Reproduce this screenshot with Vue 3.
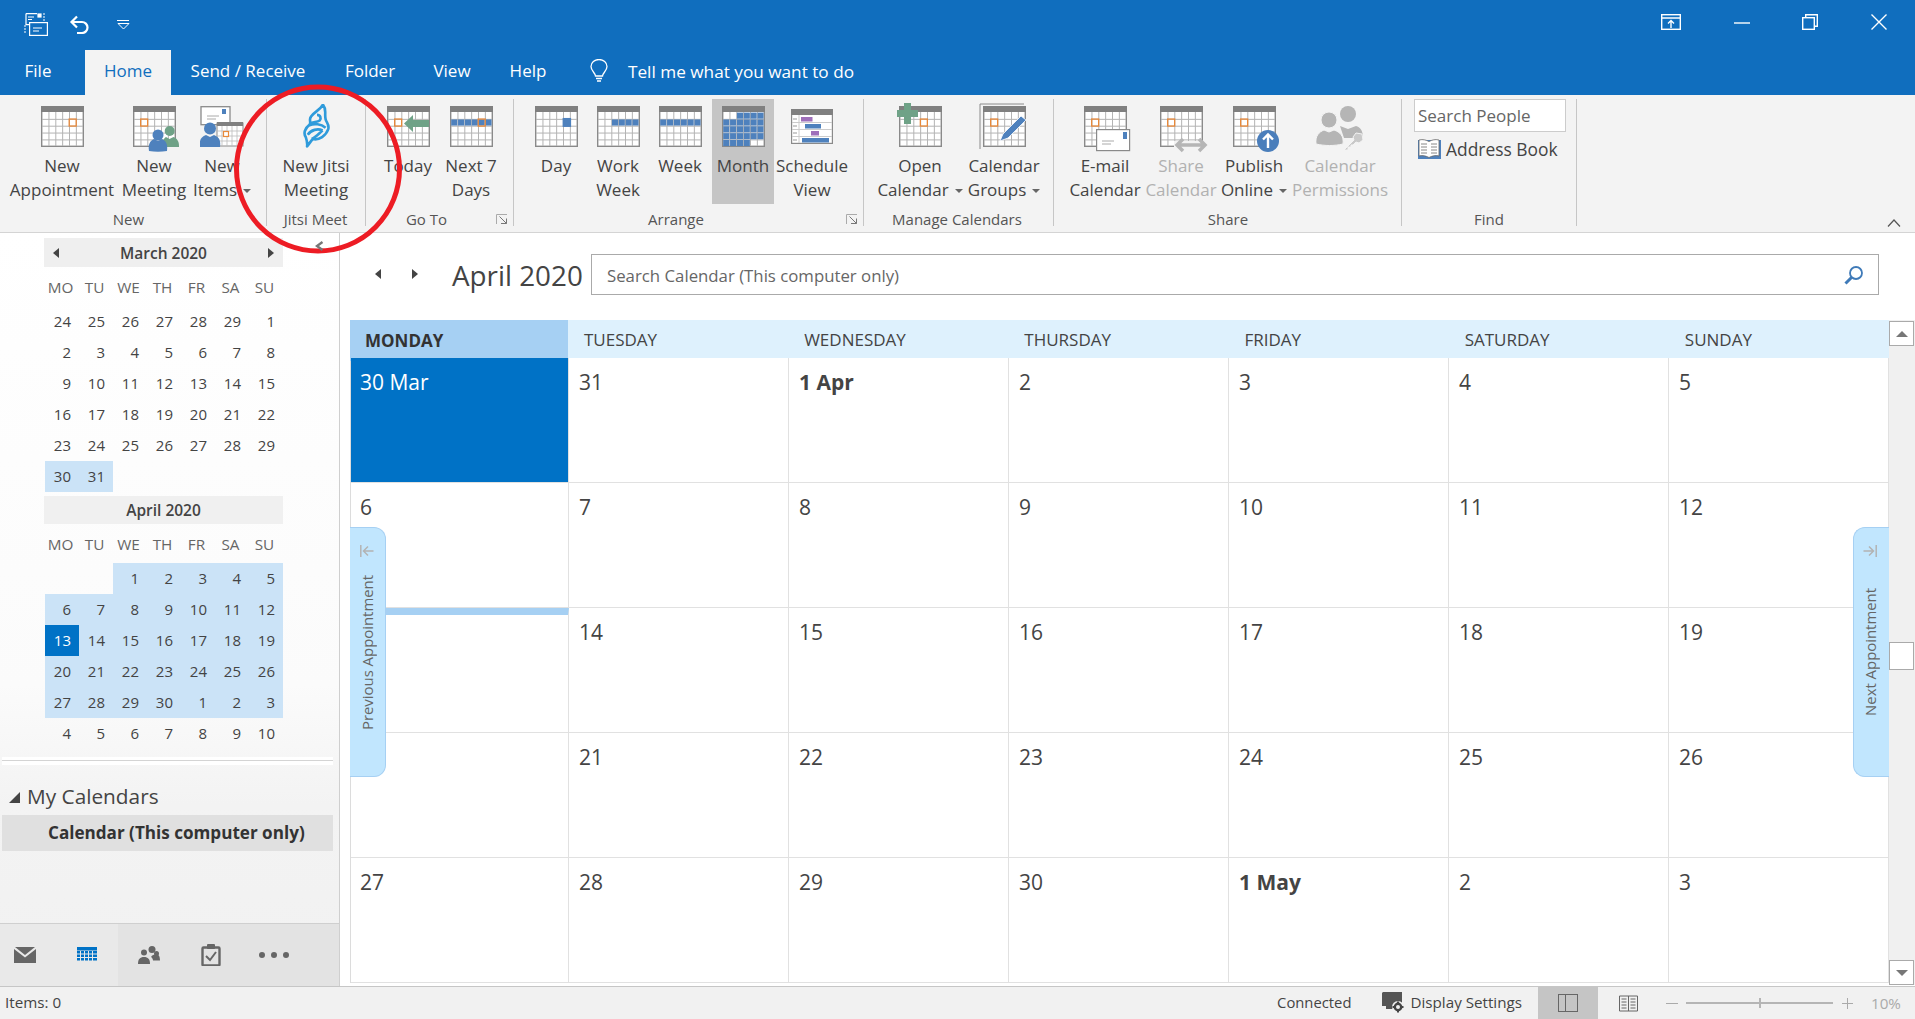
<script setup>
import { h } from 'vue'

// calendar glyph used by nearly every ribbon button
function CalIcon(props, { slots }) {
  const line = props.muted ? '#cfcdcf' : '#b4b4b4'
  const cell = (c, r) => [1.2 + c * 6.85, 6.6 + r * 6.85]
  const kids = [
    h('rect', { x: 0.7, y: 0.7, width: 41.6, height: 39.6, fill: props.muted ? '#f3eff3' : '#fff', stroke: props.muted ? '#bdbdbd' : '#8a8a8a', 'stroke-width': 1.4 }),
    h('rect', { x: 0, y: 0, width: 43, height: 6, fill: props.muted ? '#bdbdbd' : '#808080' })
  ]
  for (let c = 1; c < 6; c++) kids.push(h('rect', { x: cell(c, 0)[0] - 0.6, y: 6, width: 1, height: 34, fill: line }))
  for (let r = 1; r < 5; r++) kids.push(h('rect', { x: 1, y: cell(0, r)[1] - 0.6, width: 41, height: 1, fill: line }))
  for (const [c, r] of props.fill || []) {
    const [x, y] = cell(c, r)
    kids.push(h('rect', { x, y, width: 6.1, height: 6.1, fill: '#4e81bd' }))
  }
  if (props.big) {
    const [x, y] = cell(props.big[0], props.big[1])
    kids.push(h('rect', { x: x - 1, y: y - 1.5, width: 8.5, height: 9, fill: '#4e81bd' }))
  }
  if (props.mark) {
    const [x, y] = cell(props.mark[0], props.mark[1])
    kids.push(h('rect', { x: x - 0.4, y: y - 0.4, width: 7, height: 7, fill: 'none', stroke: props.muted ? '#bdb9bd' : '#e8893a', 'stroke-width': 1.3 }))
  }
  return h('svg', { width: 43, height: 41, viewBox: '0 0 43 41', style: 'overflow:visible;display:block' }, [kids, slots.default && slots.default()])
}
CalIcon.props = ['fill', 'mark', 'big', 'muted']

const row = (r, from = 0, to = 5) => {
  const out = []
  for (let c = from; c <= to; c++) out.push([c, r])
  return out
}

const groups = [
  {
    label: 'New', w: 267, pl: 4, lp: 13,
    btns: [
      { w: 116, lines: ['New', 'Appointment'], cal: true, mark: [4, 1] },
      { w: 68, lines: ['New', 'Meeting'], icon: 'meeting' },
      { w: 68, lines: ['New', 'Items'], icon: 'items', caret: true }
    ]
  },
  {
    label: 'Jitsi Meet', w: 99, pl: 0, lp: 1,
    btns: [{ w: 98, lines: ['New Jitsi', 'Meeting'], icon: 'jitsi' }]
  },
  {
    label: 'Go To', w: 148, pl: 12, lp: 38, launcher: true,
    btns: [
      { w: 60, lines: ['Today'], icon: 'today' },
      { w: 66, lines: ['Next 7', 'Days'], cal: true, fill: row(1), mark: [4, 1] }
    ]
  },
  {
    label: 'Arrange', w: 350, pl: 16, lp: 41, launcher: true,
    btns: [
      { w: 52, lines: ['Day'], cal: true, big: [4, 1] },
      { w: 72, lines: ['Work', 'Week'], cal: true, fill: row(1, 2) },
      { w: 52, lines: ['Week'], cal: true, fill: row(1) },
      { w: 62, ml: 6, lines: ['Month'], cal: true, active: true, fill: [...row(0, 2), ...row(1), ...row(2), ...row(3), ...row(4, 0, 3)] },
      { w: 76, lines: ['Schedule', 'View'], icon: 'schedule' }
    ]
  },
  {
    label: 'Manage Calendars', w: 190, pl: 8, lp: 11,
    btns: [
      { w: 96, lines: ['Open', 'Calendar'], icon: 'open', caret: true },
      { w: 72, lines: ['Calendar', 'Groups'], icon: 'cgroups', caret: true }
    ]
  },
  {
    label: 'Share', w: 348, pl: 12, lp: 11,
    btns: [
      { w: 78, lines: ['E-mail', 'Calendar'], icon: 'email' },
      { w: 74, lines: ['Share', 'Calendar'], icon: 'share', off: true },
      { w: 72, lines: ['Publish', 'Online'], icon: 'publish', caret: true },
      { w: 100, lines: ['Calendar', 'Permissions'], icon: 'perm', off: true }
    ]
  }
]

const weekLetters = ['MO', 'TU', 'WE', 'TH', 'FR', 'SA', 'SU']

const march = [24, 25, 26, 27, 28, 29, 1, 2, 3, 4, 5, 6, 7, 8, 9, 10, 11, 12, 13, 14, 15, 16, 17, 18, 19, 20, 21, 22, 23, 24, 25, 26, 27, 28, 29, 30, 31]
const marchCells = march.map((d, i) => ({ d, on: i >= 35 }))

const april = ['', '', 1, 2, 3, 4, 5, 6, 7, 8, 9, 10, 11, 12, 13, 14, 15, 16, 17, 18, 19, 20, 21, 22, 23, 24, 25, 26, 27, 28, 29, 30, 1, 2, 3, 4, 5, 6, 7, 8, 9, 10]
const aprilCells = april.map((d, i) => ({ d, on: i >= 2 && i < 35, sel: i === 14 }))

const dayNames = ['MONDAY', 'TUESDAY', 'WEDNESDAY', 'THURSDAY', 'FRIDAY', 'SATURDAY', 'SUNDAY']
const days = [
  { t: '30 Mar', sel: true }, { t: '31' }, { t: '1 Apr', b: true }, { t: '2' }, { t: '3' }, { t: '4' }, { t: '5' },
  { t: '6' }, { t: '7' }, { t: '8' }, { t: '9' }, { t: '10' }, { t: '11' }, { t: '12' },
  { t: '', today: true }, { t: '14' }, { t: '15' }, { t: '16' }, { t: '17' }, { t: '18' }, { t: '19' },
  { t: '' }, { t: '21' }, { t: '22' }, { t: '23' }, { t: '24' }, { t: '25' }, { t: '26' },
  { t: '27' }, { t: '28' }, { t: '29' }, { t: '30' }, { t: '1 May', b: true }, { t: '2' }, { t: '3' }
]
</script>

<template>
  <div class="app">
    <!-- title bar -->
    <div class="titlebar">
      <svg class="qat-send" width="24" height="23" viewBox="0 0 24 23" fill="none" stroke="#fff" stroke-width="1.2">
        <path d="M2 .6h11M2 .6v11h4M4 4h6M4 6.5h4" />
        <rect x="14" y="1" width="3" height="3" fill="#fff" />
        <path d="M19 1h2M19 4h2M19 7h2M0 13h3M0 16h3M0 19h3" stroke-dasharray="2 1" />
        <rect x="5.6" y="9.6" width="17.8" height="12.8" />
        <path d="M9 15h9M9 18h6" />
      </svg>
      <svg class="qat-undo" width="21" height="19" viewBox="0 0 21 19" fill="none" stroke="#fff" stroke-width="2.2">
        <path d="M8 1.5 2.5 7 8 12.5M3 7h10a5.5 5.5 0 0 1 0 11H8" />
      </svg>
      <svg class="qat-more" width="13" height="10" viewBox="0 0 13 10" fill="none" stroke="#fff">
        <path d="M0 .5h12M1 3.5l5.5 5.5L12 3.5z" />
      </svg>
      <div class="winctl">
        <svg width="20" height="16" viewBox="0 0 20 16" fill="none" stroke="#fff" stroke-width="1.4">
          <rect x=".7" y=".7" width="18.6" height="14.6" />
          <path d="M1 4h18M10 14V7M7 9.5 10 6.5l3 3" />
        </svg>
        <svg width="16" height="16" viewBox="0 0 16 16" fill="none" stroke="#fff" stroke-width="1.4">
          <path d="M0 9h16" />
        </svg>
        <svg width="16" height="16" viewBox="0 0 16 16" fill="none" stroke="#fff" stroke-width="1.4">
          <rect x=".7" y="3.7" width="11.6" height="11.6" />
          <path d="M3.7 3.5V.7h11.6v11.6h-3" />
        </svg>
        <svg width="16" height="16" viewBox="0 0 16 16" fill="none" stroke="#fff" stroke-width="1.4">
          <path d="M.5.5l15 15M15.5.5l-15 15" />
        </svg>
      </div>
    </div>

    <!-- tabs -->
    <div class="tabs">
      <div class="tab t-file">File</div>
      <div class="tab t-home">Home</div>
      <div class="tab t-send">Send / Receive</div>
      <div class="tab t-folder">Folder</div>
      <div class="tab t-view">View</div>
      <div class="tab t-help">Help</div>
      <div class="tell">
        <svg width="18" height="24" viewBox="0 0 18 24" fill="none" stroke="#fff" stroke-width="1.3">
          <path d="M5.5 17c0-3-4.5-5-4.500-9.500a8 7 0 0 1 16 0C17 12 12.500 14 12.500 17zM6 19.500h6M7 22h4" />
        </svg>
        <span>Tell me what you want to do</span>
      </div>
    </div>

    <!-- ribbon -->
    <div class="ribbon">
      <div v-for="g in groups" :key="g.label" class="group" :style="{ width: g.w + 'px', paddingLeft: g.pl + 'px' }">
        <div class="btns">
          <div
            v-for="b in g.btns"
            :key="b.lines.join()"
            class="rbtn"
            :class="{ active: b.active, off: b.off }"
            :style="{ width: b.w + 'px', marginLeft: (b.ml || 0) + 'px' }"
          >
            <div class="rico">
              <CalIcon v-if="b.cal" :fill="b.fill" :mark="b.mark" :big="b.big" />

              <CalIcon v-else-if="b.icon === 'meeting'" :mark="[1, 1]">
                <circle cx="36.700" cy="25" r="5" fill="#6fa287" />
                <path d="M30 41c-1-6 1-9 3-10l3.500 2 4-2c3 1 6 4 5.500 10z" fill="#6fa287" />
                <circle cx="25" cy="29" r="5.500" fill="#4e81bd" />
                <path d="M16 45c-1-7 1-10 5-12l4 2 4-2c4 2 6 5 5 12-6 1-12 1-18 0z" fill="#4e81bd" />
              </CalIcon>

              <svg v-else-if="b.icon === 'items'" class="free" width="44" height="42" viewBox="0 0 44 42">
                <rect x="1" y=".7" width="29" height="18" fill="#fff" stroke="#8a8a8a" stroke-width="1.300" />
                <rect x="22" y="3" width="4" height="5" fill="#4e81bd" />
                <path d="M7 10h12M7 13h9" stroke="#aaa" />
                <rect x="17" y="17" width="26" height="23" fill="#fff" stroke="#8a8a8a" />
                <rect x="17" y="16" width="26" height="4" fill="#808080" />
                <path d="M22 20v20M27 20v20M32 20v20M37 20v20M17 25h26M17 30h26M17 35h26" stroke="#bbb" stroke-width=".8" />
                <rect x="23.500" y="25.500" width="5" height="5" fill="#fff" stroke="#e8893a" stroke-width="1.200" />
                <circle cx="10" cy="22.500" r="6" fill="#4e81bd" />
                <path d="M0 41c-1-7 1-10 6-12l4 2 4-2c5 2 7 5 6 12z" fill="#4e81bd" />
              </svg>

              <svg v-else-if="b.icon === 'jitsi'" class="jitsi" width="40" height="44" viewBox="20 12 110 133" fill="none" stroke="#2f9bdb" stroke-width="8" stroke-linejoin="round">
                <path d="M96 14C88 30 70 35 60 50c-8 10 2 18-5 25-13 10-19 25-11 37 2 6 6 16 4 28 10-12 12-18 18-22 19 4 39-10 46-30 4-14-6-20-8-30-4-18 4-30-8-44z" />
                <path d="M55 76c15-6 35-4 49 8M50 105c10-15 30-20 45-13M62 118c13-6 23-18 33-26M78 45c10 0 14 10 8 17-8 6-20 3-30 10" />
              </svg>

              <CalIcon v-else-if="b.icon === 'today'" :mark="[1, 1]">
                <path d="M17 17.500 26 9v5h16v7H26v5z" fill="#6fa287" />
              </CalIcon>

              <svg v-else-if="b.icon === 'schedule'" class="sched" width="42" height="35" viewBox="0 0 42 35">
                <rect x=".6" y=".6" width="40.800" height="33.800" fill="#fff" stroke="#8a8a8a" stroke-width="1.200" />
                <rect width="42" height="6" fill="#808080" />
                <path d="M8 6v28M1 13.500h40M1 20.500h40M1 27.500h40" stroke="#ccc" />
                <path d="M2 10h4M2 17h4M2 24h4M2 31h4" stroke="#999" />
                <rect x="10" y="8" width="11.500" height="4.500" fill="#9e6fba" />
                <rect x="14" y="15" width="16" height="4.500" fill="#4e81bd" />
                <rect x="20" y="22" width="8" height="4.500" fill="#9e6fba" />
                <rect x="11" y="29" width="27" height="4.500" fill="#4e81bd" />
              </svg>

              <CalIcon v-else-if="b.icon === 'open'" :mark="[3, 1]">
                <path d="M5 -3h7v7h7v7h-7v7H5v-7h-7V4h7z" fill="#6fa287" />
              </CalIcon>

              <CalIcon v-else-if="b.icon === 'cgroups'" :mark="[1, 1]">
                <path d="M-3 43V-2h44" fill="none" stroke="#8a8a8a" />
                <path d="M17 35 20 28 38 10l5 4-18 18z" fill="#4e81bd" stroke="#fff" stroke-width=".8" />
              </CalIcon>

              <CalIcon v-else-if="b.icon === 'email'" :mark="[1, 1]">
                <rect x="12.600" y="23.600" width="33" height="21" fill="#fff" stroke="#8a8a8a" stroke-width="1.200" />
                <rect x="39" y="26" width="4" height="7" fill="#4e81bd" />
                <path d="M18 35h12M18 38h9" stroke="#aaa" />
              </CalIcon>

              <CalIcon v-else-if="b.icon === 'share'" muted :mark="[1, 1]">
                <path d="M14 39h32" stroke="#f3f3f3" stroke-width="8" />
                <path d="M23 33l-6 6 6 6M39 33l6 6-6 6M18 39h26" fill="none" stroke="#b5b5b5" stroke-width="3.500" />
              </CalIcon>

              <CalIcon v-else-if="b.icon === 'publish'" :mark="[1, 1]">
                <circle cx="35" cy="35" r="11" fill="#4a7ebb" />
                <path d="M35 42V29M30 33.500 35 28.500l5 5" fill="none" stroke="#fff" stroke-width="2.400" />
              </CalIcon>

              <svg v-else-if="b.icon === 'perm'" class="free" width="48" height="46" viewBox="0 0 48 46" fill="#b5b5b5">
                <circle cx="32" cy="8" r="8" />
                <path d="M24 20l8 3 8-3c4 1 7 4 7 12H28z" />
                <circle cx="13" cy="14" r="8" fill="#b5b5b5" stroke="#f3f3f3" />
                <path d="M0 38c-1-8 3-12 8-14l5 2 5-2c6 2 10 6 9 14-9 2-18 2-27 0z" stroke="#f3f3f3" />
                <path d="M28 44l10-10-1-3 3-4 6 1 1 6-4 3-3-1-3 3-2 0 0 2-3 0 0 3z" fill="#c9c9c9" stroke="#f3f3f3" />
              </svg>

            </div>
            <div v-for="(l, i) in b.lines" :key="i" class="rline">
              {{ l }}<i v-if="b.caret && i === b.lines.length - 1" class="caret"></i>
            </div>
          </div>
        </div>
        <div class="glabel" :style="{ paddingRight: g.lp + 'px' }">{{ g.label }}</div>
        <svg v-if="g.launcher" class="launcher" width="12" height="11" viewBox="0 0 12 11" fill="none" stroke="#777">
          <path d="M.5 10V.5H11" stroke="#aaa" />
          <path d="M3.500 2.500l7 7M5 9.500h5.500V4.500" />
        </svg>
      </div>

      <div class="group find-group">
        <div class="find">
          <div class="people">Search People</div>
          <div class="abook">
            <svg width="23" height="20" viewBox="0 0 23 20">
              <rect y="1" width="23" height="19" fill="#4e81bd" />
              <path d="M1 1c4-1 7 0 10 1.500C14 1 17 0 21 1v16c-4-1-7 0-10 1.500C8 17 5 16 1 17z" fill="#fff" stroke="#666" stroke-width=".8" />
              <path d="M3 5h6M3 8h6M3 11h6M3 14h6M13 5h6M13 8h6M13 11h6M13 14h6" stroke="#888" />
            </svg>
            <span>Address Book</span>
          </div>
        </div>
        <div class="glabel">Find</div>
      </div>

      <svg class="collapse" width="14" height="8" viewBox="0 0 14 8" fill="none" stroke="#555" stroke-width="1.200">
        <path d="M1 7.500 7 1l6 6.500" />
      </svg>
    </div>

    <div class="body">
      <!-- left nav pane -->
      <aside class="pane">
        <div class="picker">
          <div class="mhead">
            <i class="tri-l"></i><span>March 2020</span><i class="tri-r"></i>
          </div>
          <div class="wk">
            <span v-for="w in weekLetters" :key="w">{{ w }}</span>
          </div>
          <div class="mgrid">
            <span v-for="(c, i) in marchCells" :key="i" class="d" :class="{ on: c.on }">{{ c.d }}</span>
          </div>
          <div class="mhead second"><span>April 2020</span></div>
          <div class="wk">
            <span v-for="w in weekLetters" :key="w">{{ w }}</span>
          </div>
          <div class="mgrid">
            <span v-for="(c, i) in aprilCells" :key="i" class="d" :class="{ on: c.on, sel: c.sel }">{{ c.d }}</span>
          </div>
        </div>

        <div class="divider"></div>

        <div class="mycal">
          <i class="corner"></i>
          <span>My Calendars</span>
        </div>
        <div class="calrow">Calendar (This computer only)</div>

        <div class="nav">
          <svg width="22" height="16" viewBox="0 0 22 16" fill="#666">
            <path d="M1 0h20L11 8zM0 2l11 8.500L22 2v14H0z" />
          </svg>
          <svg width="22" height="16" viewBox="0 0 20 16">
            <rect width="20" height="3.500" fill="#0072c6" />
            <path d="M0 4h3v2.500H0zM4 4h3v2.500H4zM8 4h3v2.500H8zM12 4h3v2.500h-3zM16 4h4v2.500h-4zM0 7.500h3V10H0zM4 7.500h3V10H4zM8 7.500h3V10H8zM12 7.500h3V10h-3zM16 7.500h4V10h-4zM0 11h3v2.500H0zM4 11h3v2.500H4zM8 11h3v2.500H8zM12 11h3v2.500h-3zM16 11h4v2.500h-4z" fill="#0072c6" />
          </svg>
          <svg width="22" height="18" viewBox="0 0 22 18" fill="#666">
            <circle cx="14" cy="3.500" r="3.500" />
            <circle cx="6" cy="6.500" r="3" />
            <circle cx="18.500" cy="7.500" r="2.500" />
            <path d="M0 18c0-5 2-7 6-7s6 2 6 7zM13 11c1-2 3-2.500 5-2.500 3 0 4 2 4 6h-7c0-1-1-3-2-3.500z" />
          </svg>
          <svg width="22" height="22" viewBox="0 0 22 22" fill="none">
            <rect x="2.500" y="3.500" width="17" height="18" rx="1" fill="none" stroke="#666" stroke-width="2.400" />
            <rect x="7" y="0" width="8" height="5" rx="1" fill="#666" />
            <path d="M6 12l4 4 6-8" stroke="#666" stroke-width="2" />
          </svg>
          <svg class="dots" width="30" height="6" viewBox="0 0 30 6" fill="#666">
            <circle cx="3" cy="3" r="3" />
            <circle cx="15" cy="3" r="3" />
            <circle cx="27" cy="3" r="3" />
          </svg>
        </div>
      </aside>

      <main class="main">
        <div class="toolbar">
          <i class="tri-l big"></i>
          <i class="tri-r big"></i>
          <div class="cal-title">April 2020</div>
          <div class="cal-search">
            <span>Search Calendar (This computer only)</span>
            <svg width="20" height="20" viewBox="0 0 20 20" fill="none" stroke="#3f7ab8">
              <circle cx="12" cy="8" r="6" stroke-width="1.800" />
              <path d="M7.500 12.500 1.500 18.500" stroke-width="3" />
            </svg>
          </div>
        </div>

        <div class="cal-wrap">
          <div class="cal">
            <div class="cal-head">
              <div v-for="(n, i) in dayNames" :key="n" class="hd" :class="{ first: i === 0 }">{{ n }}</div>
            </div>
            <div class="cal-days">
              <div v-for="(d, i) in days" :key="i" class="cell" :class="{ sel: d.sel, bold: d.b, today: d.today }">{{ d.t }}</div>
            </div>

            <div class="appt-tab prev">
              <svg width="14" height="12" viewBox="0 0 14 12" fill="none" stroke="#b3b3b3" stroke-width="1.500">
                <path d="M.8 0v12M13.500 6H3.500M8 1.500 3.500 6 8 10.500" />
              </svg>
              <span>Previous Appointment</span>
            </div>
            <div class="appt-tab next">
              <svg width="14" height="12" viewBox="0 0 14 12" fill="none" stroke="#b3b3b3" stroke-width="1.500">
                <path d="M13.200 0v12M.5 6h10M6 1.500 10.500 6 6 10.500" />
              </svg>
              <span>Next Appointment</span>
            </div>
          </div>

          <div class="scroll">
            <div class="sbtn"><i class="up"></i></div>
            <div class="thumb"></div>
            <div class="sbtn"><i class="down"></i></div>
          </div>
        </div>
      </main>
    </div>

    <!-- status bar -->
    <div class="status">
      <span class="items">Items: 0</span>
      <span class="conn">Connected</span>
      <div class="disp">
        <svg width="23" height="21" viewBox="0 0 23 21" fill="#555">
          <path d="M1 0h19v13H11v4H4v-3H0V1z" />
          <circle cx="16" cy="15" r="6" fill="#f1f1f1" />
          <circle cx="16" cy="15" r="3.200" fill="none" stroke="#444" stroke-width="2.400" />
          <path d="M16 9.500v2M16 18.500v2M10.500 15h2M19.500 15h2" stroke="#444" stroke-width="2" />
        </svg>
        <span>Display Settings</span>
      </div>
      <div class="view-btn active">
        <svg width="20" height="18" viewBox="0 0 20 18" fill="none" stroke="#666">
          <rect x=".5" y=".5" width="19" height="17" />
          <path d="M7.500 0v18" />
        </svg>
      </div>
      <div class="view-btn">
        <svg width="19" height="17" viewBox="0 0 19 17" fill="none" stroke="#666">
          <path d="M.5 1h18v15H.5zM9.500 1v15M2.500 4h5M2.500 7h5M2.500 10h5M2.500 13h5M11.500 4h5M11.500 7h5M11.500 10h5M11.500 13h5" />
        </svg>
      </div>
      <div class="zoom">
        <i class="zm"></i>
        <div class="slider"><i class="knob"></i></div>
        <i class="zp"></i>
        <span>10%</span>
      </div>
    </div>

    <!-- hand-drawn annotation on the screenshot -->
    <svg class="ring" width="172" height="174" viewBox="0 0 172 174" fill="none">
      <ellipse cx="86" cy="87" rx="81.500" ry="82" stroke="#ed1c24" stroke-width="5" />
    </svg>
    <svg class="pane-collapse" width="9" height="10" viewBox="0 0 9 10" fill="none" stroke="#777" stroke-width="2.400">
      <path d="M7.500 1 2 5l5.500 4" />
    </svg>

  </div>
</template>

<style>
html,
body {
  margin: 0;
  background: #fff;
}
</style>

<style scoped>
.app {
  position: relative;
  width: 1915px;
  height: 1019px;
  overflow: hidden;
  display: flex;
  flex-direction: column;
  font-family: "Open Sans", "Noto Sans", sans-serif;
  color: #444;
}

.titlebar {
  height: 50px;
  background: #106ebe;
  display: flex;
  align-items: flex-start;
  padding-top: 13px;
  box-sizing: border-box;
}
.qat-send { margin-left: 24px; }
.qat-undo { margin-left: 21px; margin-top: 2px; }
.qat-more { margin-left: 27px; margin-top: 7px; }
.winctl {
  margin-left: auto;
  display: flex;
  width: 226px;
  margin-right: 28px;
  justify-content: space-between;
  padding-top: 1px;
}

.tabs {
  height: 45px;
  background: #106ebe;
  display: flex;
  color: #fff;
  font-size: 17px;
}
.tab {
  box-sizing: border-box;
  text-align: center;
  line-height: 42px;
}
.t-file { width: 85px; padding-right: 9px; }
.t-home { width: 86px; background: #f3f3f3; color: #106ebe; }
.t-send { width: 154px; }
.t-folder { width: 90px; }
.t-view { width: 74px; }
.t-help { width: 78px; }
.tell {
  display: flex;
  align-items: center;
  padding-left: 23px;
  padding-bottom: 3px;
  gap: 20px;
  font-size: 17.200px;
}

.ribbon {
  position: relative;
  height: 138px;
  box-sizing: border-box;
  background: #f3f3f3;
  border-bottom: 1px solid #d4d4d4;
  display: flex;
  padding-top: 4px;
}
.group {
  position: relative;
  box-sizing: border-box;
  height: 127px;
  border-right: 1px solid #c6c6c6;
  flex: none;
}
.btns {
  display: flex;
  height: 105px;
}
.rbtn {
  flex: none;
  box-sizing: border-box;
  text-align: center;
  white-space: nowrap;
  font-size: 17px;
  line-height: 24px;
  color: #444;
  display: flex;
  flex-direction: column;
  align-items: center;
}
.rbtn.active { background: #c5c5c5; }
.rbtn.off { color: #b1b1b1; }
.rico {
  height: 55px;
  padding-top: 7px;
  box-sizing: border-box;
  flex: none;
  width: 43px;
  display: flex;
  justify-content: center;
}
.free { flex: none; }
.jitsi { flex: none; margin-top: -2px; }
.sched { flex: none; margin-top: 3px; }
.rline { width: 0; display: flex; justify-content: center; }
.caret {
  display: inline-block;
  flex: none;
  width: 0;
  height: 0;
  border: 4px solid transparent;
  border-top: 4px solid #666;
  border-bottom: 0;
  margin: 11px 0 0 6px;
}
.glabel {
  height: 22px;
  line-height: 30px;
  text-align: center;
  font-size: 15px;
  color: #555;
  white-space: nowrap;
}
.launcher {
  position: absolute;
  right: 5px;
  bottom: 1px;
}

.find-group { width: 175px; padding-left: 12px; }
.find { height: 105px; }
.find-group .glabel { margin-left: -12px; }
.people {
  width: 152px;
  height: 33px;
  box-sizing: border-box;
  border: 1px solid #ccc;
  background: #fff;
  line-height: 31px;
  padding-left: 3px;
  font-size: 17px;
  color: #666;
}
.abook {
  display: flex;
  align-items: center;
  gap: 5px;
  margin: 7px 0 0 4px;
  font-size: 17.400px;
  line-height: 20px;
  color: #444;
}
.collapse {
  position: absolute;
  right: 14px;
  bottom: 5px;
}

.body {
  flex: 1;
  display: flex;
  min-height: 0;
}

.pane {
  width: 340px;
  flex: none;
  box-sizing: border-box;
  border-right: 1px solid #cfcfcf;
  background: linear-gradient(#fff, #fbfbfb 60%, #f3f3f3 76%, #f1f1f1);
  display: flex;
  flex-direction: column;
}
.picker {
  margin: 5px 0 0 44px;
  width: 239px;
  height: 519px;
}
.mhead {
  height: 29px;
  background: #efefef;
  display: flex;
  align-items: center;
  justify-content: space-between;
  padding: 0 9px;
  box-sizing: border-box;
  font-size: 15.500px;
  font-weight: 600;
  color: #444;
}
.mhead.second {
  justify-content: center;
  margin-top: 4px;
  height: 28px;
  background: #f0f0f0;
}
.tri-l, .tri-r {
  display: inline-block;
  width: 0;
  height: 0;
  border: 5.500px solid transparent;
  border-right: 0;
  border-left: 6px solid #444;
}
.tri-l {
  border-left: 0;
  border-right: 6px solid #444;
}
.wk {
  display: grid;
  grid-template-columns: repeat(7, 34px);
  padding-left: 1px;
  height: 39px;
  line-height: 40px;
  font-size: 15.300px;
  font-weight: 400;
  color: #666;
  text-align: center;
}
.wk span { padding-right: 3px; }
.mgrid {
  display: grid;
  grid-template-columns: repeat(7, 34px);
  grid-auto-rows: 31px;
  padding-left: 1px;
  font-size: 15px;
  line-height: 31px;
  color: #444;
}
.d {
  text-align: right;
  padding-right: 8px;
}
.d.on { background: #cbe3f7; }
.d.sel { background: #0072c6; color: #fff; }

.divider {
  margin: 0 6px 0 2px;
  height: 8px;
  background: linear-gradient(#fff 3px, #d4d4d4 3px, #d4d4d4 4px, #fff 4px);
}
.mycal {
  display: flex;
  align-items: center;
  height: 40px;
  margin-top: 11px;
  margin-bottom: -1px;
  padding-left: 9px;
  font-size: 20.800px;
  color: #444;
  gap: 7px;
}
.corner {
  width: 0;
  height: 0;
  border-left: 11px solid transparent;
  border-bottom: 11px solid #444;
  margin-top: 2px;
}
.calrow {
  margin: 0 6px 0 2px;
  height: 36px;
  line-height: 35px;
  background: #e0e0e0;
  padding-left: 46px;
  font-size: 17.100px;
  font-weight: 700;
  color: #333;
  white-space: nowrap;
}
.nav {
  margin-top: auto;
  height: 63px;
  box-sizing: border-box;
  border-top: 1px solid #cfcfcf;
  background: linear-gradient(90deg, #e9e9e9 118px, #e3e3e3 118px);
  display: flex;
  align-items: center;
  padding-left: 14px;
  gap: 40px;
}
.dots { margin-left: -3px; }

.main {
  flex: 1;
  min-width: 0;
  display: flex;
  flex-direction: column;
}
.toolbar {
  height: 87px;
  box-sizing: border-box;
  padding: 21px 0 0 35px;
  display: flex;
  align-items: flex-start;
  align-self: stretch;
}
.toolbar > * { flex: none; }
.big { margin-top: 15px; }
.tri-r.big { margin-left: 31px; }
.cal-title {
  margin-left: 34px;
  width: 139px;
  font-size: 27.800px;
  line-height: 42px;
  color: #444;
}
.cal-search {
  width: 1288px;
  height: 41px;
  box-sizing: border-box;
  border: 1px solid #aaa;
  display: flex;
  align-items: center;
  justify-content: space-between;
  padding: 1px 14px 0 15px;
  font-size: 16.800px;
  color: #666;
}

.cal-wrap {
  display: flex;
  margin-left: 10px;
  height: 665px;
}
.cal {
  position: relative;
  width: 1539px;
  flex: none;
}
.cal-head {
  display: grid;
  grid-template-columns: 218px repeat(6, 1fr);
  height: 38px;
  background: #def1fd;
}
.hd {
  font-size: 17px;
  line-height: 40px;
  padding-left: 16px;
  color: #444;
}
.hd.first {
  background: #a6d0f3;
  font-weight: 700;
  padding-left: 15px;
  line-height: 41px;
  color: #333;
}
.cal-days {
  display: grid;
  grid-template-columns: 218px repeat(6, 1fr);
  grid-auto-rows: 125px;
  border-left: 1px solid #dcdcdc;
}
.cell {
  box-sizing: border-box;
  border-right: 1px solid #e1e1e1;
  border-bottom: 1px solid #e1e1e1;
  padding: 8.500px 0 0 10px;
  font-size: 21px;
  line-height: 30px;
  color: #444;
}
.cell:nth-child(7n + 1) { padding-left: 9px; }
.cell.sel {
  background: #0072c6;
  color: #fff;
}
.cell.bold { font-weight: 700; }
.cell.today { border-top: 7px solid #a6d0f3; }

.appt-tab {
  position: absolute;
  top: 207px;
  height: 250px;
  width: 36px;
  box-sizing: border-box;
  background: #c1e6fe;
  border: 1px solid #a6d0f3;
  display: flex;
  flex-direction: column;
  align-items: center;
  color: #666;
  font-size: 14.900px;
  padding-top: 17px;
}
.appt-tab span {
  writing-mode: vertical-rl;
  transform: rotate(180deg);
  margin-top: 18px;
  white-space: nowrap;
  line-height: 16px;
}
.appt-tab.prev {
  left: 0;
  border-left: 0;
  border-radius: 0 12px 12px 0;
  padding-right: 2px;
}
.appt-tab.next {
  right: 0;
  border-right: 0;
  border-radius: 12px 0 0 12px;
  padding-right: 3px;
}
.appt-tab.next span { margin-top: 31px; }

.scroll {
  width: 26px;
  flex: none;
  background: #f0f0f0;
  display: flex;
  flex-direction: column;
  justify-content: space-between;
  position: relative;
}
.sbtn {
  width: 25px;
  height: 25px;
  box-sizing: border-box;
  background: #fff;
  border: 1px solid #aaa;
  display: flex;
  align-items: center;
  justify-content: center;
  margin-top: 1px;
}
.up, .down {
  width: 0;
  height: 0;
  border: 6px solid transparent;
  border-top: 0;
  border-bottom: 6px solid #777;
}
.down {
  border-bottom: 0;
  border-top: 6px solid #777;
}
.thumb {
  position: absolute;
  top: 322px;
  left: 0;
  width: 25px;
  height: 28px;
  box-sizing: border-box;
  background: #fff;
  border: 1px solid #aaa;
}

.status {
  height: 33px;
  flex: none;
  box-sizing: border-box;
  border-top: 1px solid #c6c6c6;
  background: #f1f1f1;
  display: flex;
  align-items: center;
  font-size: 15.200px;
  color: #444;
}
.items { margin-left: 5px; margin-bottom: 2px; }
.conn { margin-left: auto; margin-right: 31px; margin-bottom: 2px; font-size: 14.800px; }
.disp {
  display: flex;
  align-items: center;
  gap: 5px;
  margin-right: 16px;
  margin-bottom: 2px;
}
.view-btn {
  width: 60px;
  height: 100%;
  display: flex;
  align-items: center;
  justify-content: center;
}
.view-btn.active { background: #c5c5c5; }
.zoom {
  display: flex;
  align-items: center;
  width: 257px;
  box-sizing: border-box;
  padding-left: 8px;
  color: #aaa;
}
.zm {
  width: 12px;
  height: 1px;
  background: #aaa;
}
.slider {
  position: relative;
  width: 147px;
  height: 2px;
  background: #b5b5b5;
  margin: 0 9px 0 8px;
}
.knob {
  position: absolute;
  left: 73px;
  top: -4px;
  width: 2px;
  height: 10px;
  background: #b5b5b5;
}
.zp {
  position: relative;
  width: 11px;
  height: 1px;
  background: #aaa;
  margin-right: 18px;
}
.zp::after {
  content: '';
  position: absolute;
  left: 5px;
  top: -5px;
  width: 1px;
  height: 11px;
  background: #aaa;
}

.ring {
  position: absolute;
  left: 232px;
  top: 82px;
  pointer-events: none;
}
.pane-collapse {
  position: absolute;
  left: 315px;
  top: 241px;
}
</style>
